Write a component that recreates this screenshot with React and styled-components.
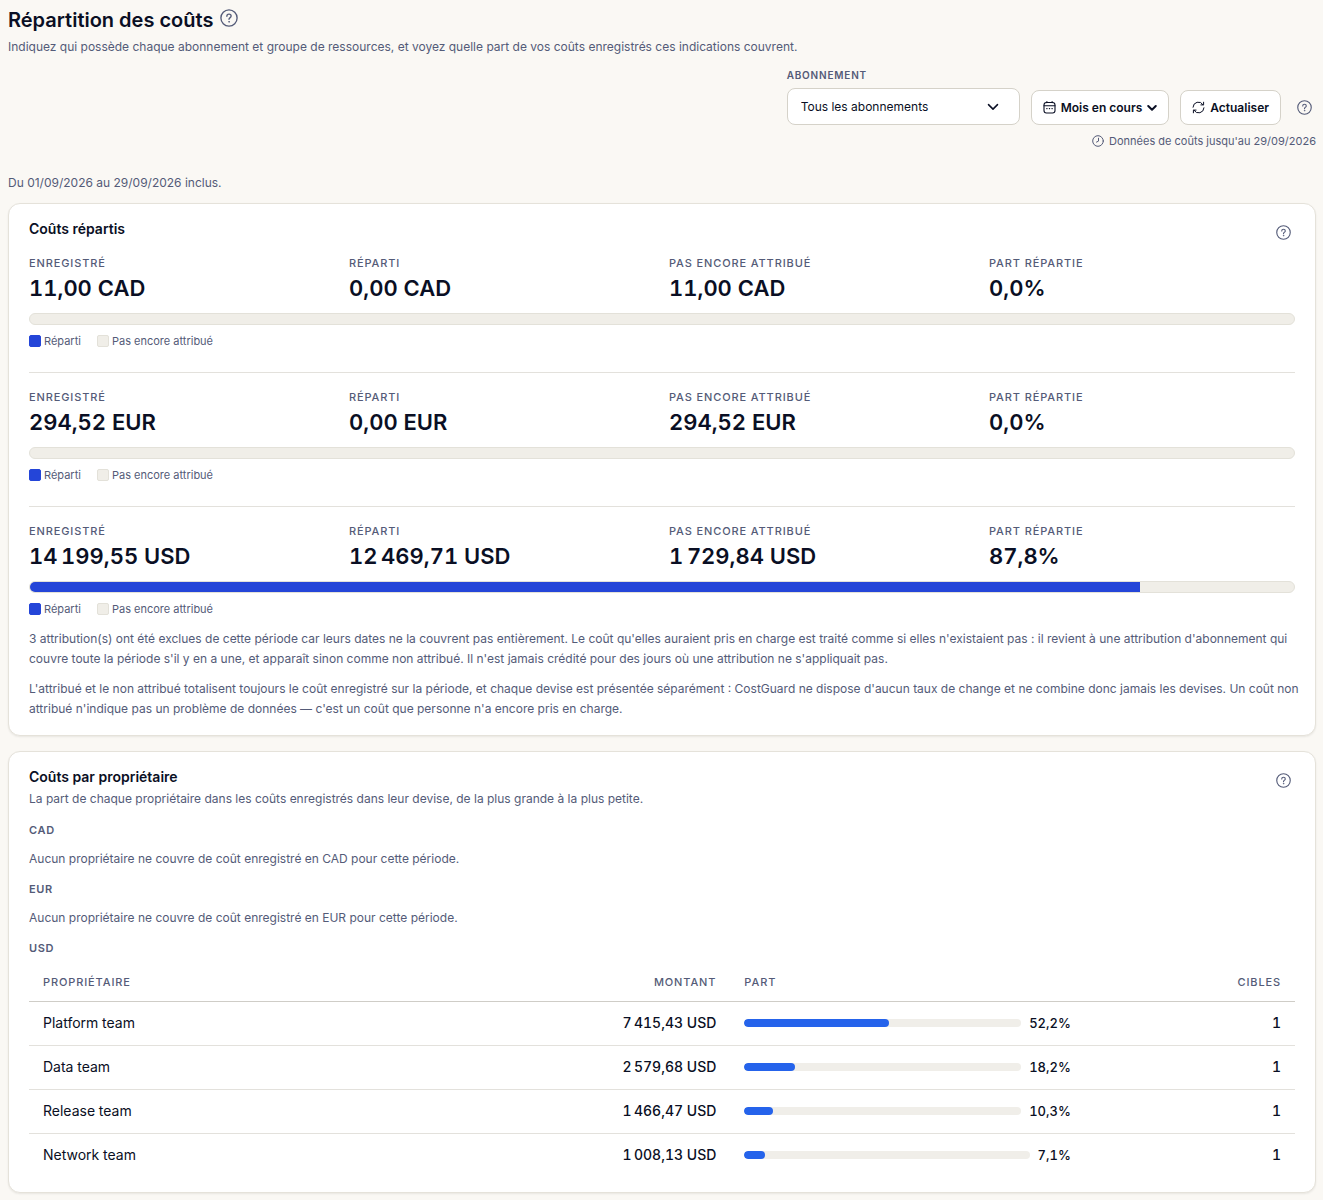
import React from "react";
import styled, { createGlobalStyle } from "styled-components";

const GlobalStyle = createGlobalStyle`
  *, *::before, *::after { box-sizing: border-box; }
  body {
    margin: 0;
    background: #faf8f4;
    color: #0a0f24;
    font: 400 12px/20px Inter, "Liberation Sans", sans-serif;
  }
  h1, h2, h3, p, dl, dd { margin: 0; }
  button, select { font: inherit; color: inherit; }
`;

const Page = styled.main`
  padding: 6px 7px 8px 8px;
`;

const TitleRow = styled.header`
  display: flex;
  align-items: flex-start;
  gap: 4px;
`;

const PageTitle = styled.h1`
  font-size: 20px;
  line-height: 28px;
  font-weight: 600;
`;

const Muted = styled.p`
  color: #545b78;
  margin-top: ${(p) => p.$gap || 0}px;
`;

const Note = styled(Muted)`
  margin-right: -8px;
`;

const IconButton = styled.button`
  display: inline-flex;
  align-items: center;
  justify-content: center;
  flex: none;
  width: 24px;
  height: ${(p) => p.$height || 24}px;
  padding: 0;
  border: 0;
  background: none;
  color: #545b78;
  cursor: pointer;
`;

const Toolbar = styled.div`
  display: flex;
  flex-wrap: wrap;
  justify-content: flex-end;
  align-items: flex-end;
  gap: 11px;
  margin-top: 10px;
`;

const Field = styled.div`
  display: flex;
  flex-direction: column;
  gap: 5px;
`;

const FieldLabel = styled.label`
  font-size: 10px;
  line-height: 16px;
  font-weight: 600;
  letter-spacing: 0.08em;
  text-transform: uppercase;
  color: #545b78;
`;

const SelectBox = styled.div`
  display: grid;
  align-items: center;
  width: 233px;
  > * { grid-area: 1 / 1; }
  > svg {
    justify-self: end;
    margin-right: 21px;
    pointer-events: none;
  }
`;

const Select = styled.select`
  appearance: none;
  width: 100%;
  height: 37px;
  padding: 0 44px 0 13px;
  border: 1px solid #d5d2c9;
  border-radius: 8px;
  background: #fff;
`;

const ToolButton = styled.button`
  display: inline-flex;
  align-items: center;
  gap: 5px;
  height: 35px;
  padding: 0 11px;
  border: 1px solid #d5d2c9;
  border-radius: 8px;
  background: #fff;
  font-weight: 600;
  cursor: pointer;
`;

const Freshness = styled.p`
  display: flex;
  justify-content: flex-end;
  align-items: center;
  gap: 5px;
  margin-top: 7px;
  font-size: 11px;
  line-height: 18px;
  color: #545b78;
`;

const Card = styled.section`
  margin-top: ${(p) => p.$gap}px;
  padding: 16px 20px;
  border: 1px solid #e5e2da;
  border-radius: 12px;
  background: #fff;
  box-shadow: 0 1px 2px rgba(20, 20, 10, 0.08);
`;

const CardHead = styled.div`
  display: flex;
  justify-content: space-between;
  align-items: flex-start;
`;

const CardTitle = styled.h2`
  font-size: 14px;
  line-height: 18px;
  font-weight: 600;
`;

const Currency = styled.div`
  padding-top: ${(p) => (p.$first ? 10 : 15)}px;
  padding-bottom: ${(p) => (p.$last ? 0 : 22)}px;
  border-top: ${(p) => (p.$first ? "0" : "1px solid #e3e1dc")};
`;

const Stats = styled.dl`
  display: grid;
  grid-template-columns: repeat(4, 1fr);
  gap: 14px;
`;

const StatLabel = styled.dt`
  font-size: 11px;
  line-height: 18px;
  font-weight: 500;
  letter-spacing: 0.08em;
  text-transform: uppercase;
  color: #545b78;
`;

const StatValue = styled.dd`
  margin-top: 1px;
  font-size: 22px;
  line-height: 30px;
  font-weight: 600;
  font-variant-numeric: tabular-nums;
  white-space: nowrap;
`;

const SplitBar = styled.div`
  height: 12px;
  margin-top: 10px;
  border: 1px solid #e3e1d9;
  border-radius: 6px;
  background: #f0eee8;
  overflow: hidden;
`;

const SplitFill = styled.div`
  height: 100%;
  background: #2445d8;
`;

const Legend = styled.div`
  display: flex;
  gap: 16px;
  margin-top: 7px;
  font-size: 11px;
  line-height: 18px;
  color: #545b78;
`;

const LegendItem = styled.span`
  display: inline-flex;
  align-items: center;
  gap: 3px;
  &::before {
    content: "";
    width: 12px;
    height: 12px;
    border: 1px solid ${(p) => (p.$on ? "#2445d8" : "#e3e1d9")};
    border-radius: 2px;
    background: ${(p) => (p.$on ? "#2445d8" : "#f0eee8")};
  }
`;

const GroupTitle = styled.h3`
  margin-top: ${(p) => p.$gap}px;
  font-size: 11px;
  line-height: 18px;
  font-weight: 600;
  letter-spacing: 0.06em;
  color: #545b78;
`;

const Table = styled.table`
  width: 100%;
  margin-top: 6px;
  border-collapse: separate;
  border-spacing: 0;
  table-layout: fixed;
`;

const Th = styled.th`
  width: ${(p) => p.$width};
  padding: 10px 14px;
  border-bottom: 1px solid #cfcdc7;
  font-size: 11px;
  line-height: 18px;
  font-weight: 500;
  letter-spacing: 0.08em;
  text-transform: uppercase;
  text-align: ${(p) => (p.$end ? "right" : "left")};
  color: #545b78;
`;

const Td = styled.td`
  padding: 11px 14px 12px;
  font-size: 14px;
  line-height: 20px;
  white-space: nowrap;
  text-align: ${(p) => (p.$end ? "right" : "left")};
  font-weight: ${(p) => (p.$strong ? 500 : 400)};
  font-variant-numeric: tabular-nums;
`;

const Row = styled.tr`
  &:not(:last-child) > td { border-bottom: 1px solid #e3e1dc; }
  &:last-child > td { padding-bottom: 11px; }
`;

const Share = styled.div`
  display: flex;
  align-items: center;
  gap: 8px;
`;

const ShareTrack = styled.div`
  flex: 1;
  height: 8px;
  border-radius: 4px;
  background: #f0eee9;
  overflow: hidden;
`;

const ShareFill = styled.div`
  height: 100%;
  border-radius: 4px;
  background: #2563eb;
`;

const ShareValue = styled.span`
  font-size: 13px;
`;

const stroke = { fill: "none", stroke: "currentColor", strokeLinecap: "round", strokeLinejoin: "round" };

const HelpIcon = ({ size = 15 }) => (
  <svg width={size} height={size} viewBox="0 0 16 16" {...stroke} strokeWidth="1.2" aria-hidden="true">
    <circle cx="8" cy="8" r="7.2" />
    <path d="M6.1 6.4c0-1.1.8-1.9 1.9-1.9s1.9.7 1.9 1.8c0 .8-.5 1.2-1.1 1.6-.5.4-.8.7-.8 1.3" />
    <circle cx="8" cy="11.4" r=".35" fill="currentColor" strokeWidth=".7" />
  </svg>
);

const ChevronIcon = ({ width = 12, weight = 1.5 }) => (
  <svg width={width} height={width} viewBox="0 0 12 12" {...stroke} strokeWidth={weight} aria-hidden="true">
    <path d="M1.5 3.6 6 8.1l4.5-4.5" />
  </svg>
);

const CalendarIcon = () => (
  <svg width="13" height="13" viewBox="0 0 13 13" {...stroke} strokeWidth="1.1" aria-hidden="true">
    <rect x="1" y="1.5" width="11" height="10.5" rx="2.4" />
    <path d="M1 4.7h11M3.9.6v1M9.1.6v1" />
    <path d="M3.7 7.6h.4M6.3 7.6h.4M8.9 7.6h.4" />
  </svg>
);

const RefreshIcon = () => (
  <svg width="13" height="13" viewBox="0 0 13 13" {...stroke} strokeWidth="1" aria-hidden="true">
    <path d="M1 6.2A5.4 5.4 0 0 1 11 3.7M11.6 1.200v2.700H8.900" />
    <path d="M12 6.800A5.400 5.400 0 0 1 2 9.300M1.400 11.800V9.100h2.700" />
  </svg>
);

const ClockIcon = () => (
  <svg width="12" height="12" viewBox="0 0 12 12" {...stroke} strokeWidth="1" aria-hidden="true">
    <circle cx="6" cy="6" r="5.3" />
    <path d="M6.500 3.200v2.900L4.500 7.100" />
  </svg>
);

const currencies = [
  { code: "CAD", total: "11,00", split: "0,00", rest: "11,00", pct: 0, label: "0,0%" },
  { code: "EUR", total: "294,52", split: "0,00", rest: "294,52", pct: 0, label: "0,0%" },
  { code: "USD", total: "14\u202f199,55", split: "12\u202f469,71", rest: "1\u202f729,84", pct: 87.8, label: "87,8%" },
];

const owners = [
  { name: "Platform team", amount: "7\u202f415,43 USD", pct: 52.2, label: "52,2%" },
  { name: "Data team", amount: "2\u202f579,68 USD", pct: 18.2, label: "18,2%" },
  { name: "Release team", amount: "1\u202f466,47 USD", pct: 10.3, label: "10,3%" },
  { name: "Network team", amount: "1\u202f008,13 USD", pct: 7.1, label: "7,1%" },
];

const Help = ({ size, height }) => (
  <IconButton type="button" aria-label="Aide" $height={height}>
    <HelpIcon size={size} />
  </IconButton>
);

const Stat = ({ label, value }) => (
  <div>
    <StatLabel>{label}</StatLabel>
    <StatValue>{value}</StatValue>
  </div>
);

export default function App() {
  return (
    <>
      <GlobalStyle />
      <Page>
        <TitleRow>
          <PageTitle>Répartition des coûts</PageTitle>
          <Help size={18} />
        </TitleRow>
        <Muted $gap={3}>
          Indiquez qui possède chaque abonnement et groupe de ressources, et voyez quelle part de vos coûts enregistrés ces indications couvrent.
        </Muted>

        <Toolbar>
          <Field>
            <FieldLabel htmlFor="subscription">Abonnement</FieldLabel>
            <SelectBox>
              <Select id="subscription" defaultValue="all">
                <option value="all">Tous les abonnements</option>
              </Select>
              <ChevronIcon />
            </SelectBox>
          </Field>
          <ToolButton type="button">
            <CalendarIcon />
            Mois en cours
            <ChevronIcon width={10} weight={2.4} />
          </ToolButton>
          <ToolButton type="button">
            <RefreshIcon />
            Actualiser
          </ToolButton>
          <Help height={35} />
        </Toolbar>
        <Freshness>
          <ClockIcon />
          Données de coûts jusqu'au 29/09/2026
        </Freshness>

        <Muted $gap={23}>Du 01/09/2026 au 29/09/2026 inclus.</Muted>

        <Card $gap={10}>
          <CardHead>
            <CardTitle>Coûts répartis</CardTitle>
            <Help />
          </CardHead>
          {currencies.map((c, i) => (
            <Currency key={c.code} $first={i === 0} $last={i === currencies.length - 1}>
              <Stats>
                <Stat label="Enregistré" value={`${c.total} ${c.code}`} />
                <Stat label="Réparti" value={`${c.split} ${c.code}`} />
                <Stat label="Pas encore attribué" value={`${c.rest} ${c.code}`} />
                <Stat label="Part répartie" value={c.label} />
              </Stats>
              <SplitBar>
                <SplitFill style={{ width: `${c.pct}%` }} />
              </SplitBar>
              <Legend>
                <LegendItem $on>Réparti</LegendItem>
                <LegendItem>Pas encore attribué</LegendItem>
              </Legend>
            </Currency>
          ))}
          <Note $gap={11}>
            3 attribution(s) ont été exclues de cette période car leurs dates ne la couvrent pas entièrement. Le coût qu'elles auraient pris en charge est traité comme si elles n'existaient pas : il revient à une attribution d'abonnement qui couvre toute la période s'il y en a une, et apparaît sinon comme non attribué. Il n'est jamais crédité pour des jours où une attribution ne s'appliquait pas.
          </Note>
          <Note $gap={10}>
            L'attribué et le non attribué totalisent toujours le coût enregistré sur la période, et chaque devise est présentée séparément : CostGuard ne dispose d'aucun taux de change et ne combine donc jamais les devises. Un coût non attribué n'indique pas un problème de données — c'est un coût que personne n'a encore pris en charge.
          </Note>
        </Card>

        <Card $gap={15}>
          <CardHead>
            <div>
              <CardTitle>Coûts par propriétaire</CardTitle>
              <Muted $gap={3}>
                La part de chaque propriétaire dans les coûts enregistrés dans leur devise, de la plus grande à la plus petite.
              </Muted>
            </div>
            <Help />
          </CardHead>
          <GroupTitle $gap={12}>CAD</GroupTitle>
          <Muted $gap={10}>Aucun propriétaire ne couvre de coût enregistré en CAD pour cette période.</Muted>
          <GroupTitle $gap={11}>EUR</GroupTitle>
          <Muted $gap={10}>Aucun propriétaire ne couvre de coût enregistré en EUR pour cette période.</Muted>
          <GroupTitle $gap={11}>USD</GroupTitle>
          <Table>
            <thead>
              <tr>
                <Th $width="38%">Propriétaire</Th>
                <Th $width="17.4%" $end>Montant</Th>
                <Th $width="28%">Part</Th>
                <Th $end>Cibles</Th>
              </tr>
            </thead>
            <tbody>
              {owners.map((o) => (
                <Row key={o.name}>
                  <Td>{o.name}</Td>
                  <Td $end $strong>{o.amount}</Td>
                  <Td $strong>
                    <Share>
                      <ShareTrack>
                        <ShareFill style={{ width: `${o.pct}%` }} />
                      </ShareTrack>
                      <ShareValue>{o.label}</ShareValue>
                    </Share>
                  </Td>
                  <Td $end $strong>1</Td>
                </Row>
              ))}
            </tbody>
          </Table>
        </Card>
      </Page>
    </>
  );
}
